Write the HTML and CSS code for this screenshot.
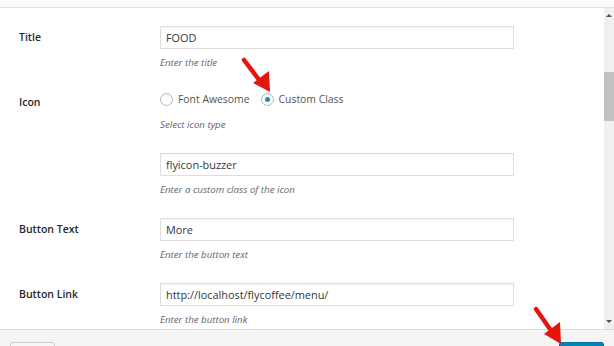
FILE: index.html
```html
<!DOCTYPE html>
<html>
<head>
<meta charset="utf-8">
<title>Slide Settings</title>
<link rel="stylesheet" href="styles.css">
</head>
<body>
<div class="topBar"></div>
<div class="mainArea">
  <div class="formArea">
    <div class="fieldRow">
      <label class="fieldLabel">Title</label>
      <div class="fieldBody">
        <input class="textInput" type="text" value="FOOD">
        <p class="fieldDesc">Enter the title</p>
      </div>
    </div>
    <div class="fieldRow">
      <label class="fieldLabel">Icon</label>
      <div class="fieldBody">
        <div class="radioLine">
          <span class="radioItem"><span class="radioDot"></span>Font Awesome</span>
          <span class="radioItem"><span class="radioDot checked"></span>Custom Class</span>
        </div>
        <p class="fieldDesc descRadio">Select icon type</p>
        <input class="textInput inputSub" type="text" value="flyicon-buzzer">
        <p class="fieldDesc">Enter a custom class of the icon</p>
      </div>
    </div>
    <div class="fieldRow">
      <label class="fieldLabel">Button Text</label>
      <div class="fieldBody">
        <input class="textInput" type="text" value="More">
        <p class="fieldDesc">Enter the button text</p>
      </div>
    </div>
    <div class="fieldRow">
      <label class="fieldLabel">Button Link</label>
      <div class="fieldBody">
        <input class="textInput" type="text" value="http://localhost/flycoffee/menu/">
        <p class="fieldDesc">Enter the button link</p>
      </div>
    </div>
  </div>
  <div class="scrollBar">
    <span class="arrowUp"></span>
    <span class="scrollThumb"></span>
    <span class="arrowDown"></span>
  </div>
</div>
<div class="footerBar">
  <button class="btn" type="button" title="Cancel"></button>
  <button class="btn btnPrimary" type="button" title="Save"></button>
</div>

<svg class="pointer pointerOne" width="40" height="44" viewBox="0 0 40 44">
  <line x1="4" y1="4" x2="20" y2="25" stroke="#e2160e" stroke-width="4.5" stroke-linecap="round"/>
  <polygon points="13,27 29,15 30,36" fill="#e2160e"/>
</svg>
<svg class="pointer pointerTwo" width="40" height="46" viewBox="0 0 40 46">
  <line x1="4" y1="4" x2="20" y2="27" stroke="#e2160e" stroke-width="4.5" stroke-linecap="round"/>
  <polygon points="12,29 28,17 29,39" fill="#e2160e"/>
</svg>
</body>
</html>
```
FILE: styles.css
```css
body {
  margin: 0;
  overflow: hidden;
  height: 346px;
  font-family: "Open Sans", "Noto Sans", sans-serif;
  color: #444;
  background-color: white;
}
.topBar {
  height: 7px;
  background-color: #fbfbfb;
  border-bottom: 1px solid #e2e2e2;
}
.mainArea {
  display: flex;
  height: 321px;
}
.formArea {
  flex: 1;
  padding: 18px 0 0 19px;
  display: flex;
  flex-direction: column;
  gap: 20px;
}
.fieldRow {
  display: flex;
}
.fieldLabel {
  width: 141px;
  line-height: 23px;
  font-size: 10.5px;
  font-weight: 600;
  color: #23282d;
}
.fieldBody {
  width: 354px;
}
.textInput {
  display: block;
  box-sizing: border-box;
  width: 354px;
  height: 23px;
  margin: 0;
  padding: 0 5px;
  border: 1px solid #dedede;
  box-shadow: inset 0 1px 1px rgba(0,0,0,0.04);
  font-family: "Open Sans", "Noto Sans", sans-serif;
  font-size: 10.9px;
  color: #32373c;
  background: white;
  outline: none;
}
.fieldDesc {
  margin: 6px 0 0 0;
  line-height: 16px;
  font-size: 9.7px;
  font-style: italic;
  color: #666;
}
.radioLine {
  display: flex;
  align-items: center;
  height: 20px;
  margin-top: -2px;
  gap: 11px;
  font-size: 10.4px;
  color: #555;
}
.radioItem {
  display: flex;
  align-items: center;
  gap: 5px;
}
.radioDot {
  box-sizing: border-box;
  width: 13px;
  height: 13px;
  border: 1px solid #b4b9be;
  border-radius: 50%;
  background: white;
  box-shadow: inset 0 1px 2px rgba(0,0,0,0.07);
  display: flex;
  align-items: center;
  justify-content: center;
}
.radioDot.checked::after {
  content: "";
  width: 5px;
  height: 5px;
  border-radius: 50%;
  background-color: #1e8cbe;
}
.descRadio {
  margin-top: 8px;
}
.inputSub {
  margin-top: 20px;
}
.scrollBar {
  width: 10px;
  background-color: #f0f0f0;
  display: flex;
  flex-direction: column;
  align-items: center;
}
.arrowUp {
  margin-top: 6px;
  border-left: 3px solid transparent;
  border-right: 3px solid transparent;
  border-bottom: 3px solid #505050;
}
.scrollThumb {
  margin-top: 55px;
  width: 10px;
  height: 49px;
  background-color: #c1c1c1;
}
.arrowDown {
  margin-top: auto;
  margin-bottom: 6px;
  border-left: 3px solid transparent;
  border-right: 3px solid transparent;
  border-top: 3px solid #505050;
}
.footerBar {
  display: flex;
  justify-content: space-between;
  align-items: flex-start;
  height: 40px;
  padding: 12px 10px 0 10px;
  border-top: 1px solid #dcdcdc;
  background-color: #f5f5f5;
}
.btn {
  width: 45px;
  height: 28px;
  border: 1px solid #cccccc;
  border-radius: 3px;
  background-color: #f7f7f7;
}
.btnPrimary {
  background-color: #0085ba;
  border-color: #0073aa #006799 #006799;
}
.pointer {
  position: absolute;
}
.pointerOne {
  left: 240px;
  top: 56px;
}
.pointerTwo {
  left: 532px;
  top: 305px;
}
```
